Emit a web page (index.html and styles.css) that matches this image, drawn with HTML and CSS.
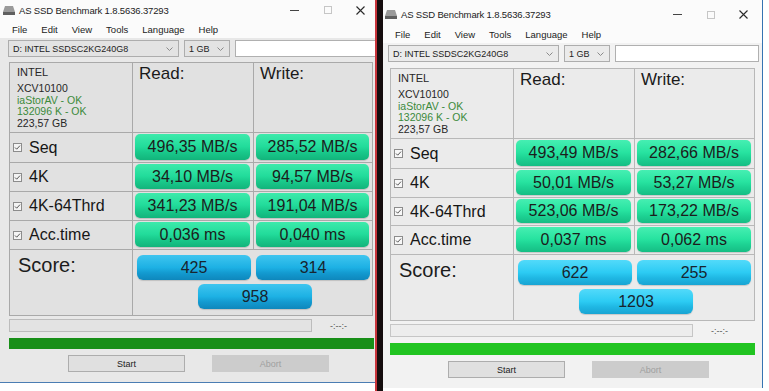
FILE: index.html
```html
<!DOCTYPE html>
<html lang="en">
<head>
  <meta charset="UTF-8">
  <title>AS SSD Benchmark</title>
  <link rel="stylesheet" href="styles.css">
</head>
<body>
  <div class="frame left">
    <div class="win">
      <div class="titlebar">
        <svg class="appicon" width="12" height="9" viewBox="0 0 12 9"><polygon points="2,0 10,0 12,6 0,6" fill="#9a9a9a"/><rect x="0" y="6" width="12" height="3" fill="#5f5f5f"/></svg>
        <span class="title">AS SSD Benchmark 1.8.5636.37293</span>
        <div class="controls">
          <span class="ctl"><i class="min"></i></span>
          <span class="ctl"><i class="max"></i></span>
          <span class="ctl"><svg width="9" height="9" viewBox="0 0 9 9"><path d="M0.5 0.5L8.5 8.5M8.5 0.5L0.5 8.5" stroke="#2a2a2a" stroke-width="1.1"/></svg></span>
        </div>
      </div>
      <div class="menubar">
        <span>File</span><span>Edit</span><span>View</span><span>Tools</span><span>Language</span><span>Help</span>
      </div>
      <div class="toolbar">
        <div class="combo drive">D: INTEL SSDSC2KG240G8 <svg width="7" height="4" viewBox="0 0 7 4"><polyline points="0.5,0.5 3.5,3.5 6.5,0.5" fill="none" stroke="#8a8a8a"/></svg></div>
        <div class="combo size">1 GB <svg width="7" height="4" viewBox="0 0 7 4"><polyline points="0.5,0.5 3.5,3.5 6.5,0.5" fill="none" stroke="#8a8a8a"/></svg></div>
        <div class="field"></div>
      </div>
      <div class="grid">
        <div class="info">
          <div class="brand">INTEL</div>
          <div>XCV10100</div>
          <div class="ok">iaStorAV - OK</div>
          <div class="ok">132096 K - OK</div>
          <div>223,57 GB</div>
        </div>
        <div class="head">Read:</div>
        <div class="head">Write:</div>

        <div class="label"><svg class="chk" width="9" height="9" viewBox="0 0 9 9"><rect x="0.5" y="0.5" width="8" height="8" fill="#f4f4f4" stroke="#8c8c8c"/><polyline points="2,4.5 3.7,6.2 7,2.6" fill="none" stroke="#555" stroke-width="1"/></svg>Seq</div>
        <div class="cell"><div class="res">496,35 MB/s</div></div>
        <div class="cell"><div class="res">285,52 MB/s</div></div>

        <div class="label"><svg class="chk" width="9" height="9" viewBox="0 0 9 9"><rect x="0.5" y="0.5" width="8" height="8" fill="#f4f4f4" stroke="#8c8c8c"/><polyline points="2,4.5 3.7,6.2 7,2.6" fill="none" stroke="#555" stroke-width="1"/></svg>4K</div>
        <div class="cell"><div class="res">34,10 MB/s</div></div>
        <div class="cell"><div class="res">94,57 MB/s</div></div>

        <div class="label"><svg class="chk" width="9" height="9" viewBox="0 0 9 9"><rect x="0.5" y="0.5" width="8" height="8" fill="#f4f4f4" stroke="#8c8c8c"/><polyline points="2,4.5 3.7,6.2 7,2.6" fill="none" stroke="#555" stroke-width="1"/></svg>4K-64Thrd</div>
        <div class="cell"><div class="res">341,23 MB/s</div></div>
        <div class="cell"><div class="res">191,04 MB/s</div></div>

        <div class="label"><svg class="chk" width="9" height="9" viewBox="0 0 9 9"><rect x="0.5" y="0.5" width="8" height="8" fill="#f4f4f4" stroke="#8c8c8c"/><polyline points="2,4.5 3.7,6.2 7,2.6" fill="none" stroke="#555" stroke-width="1"/></svg>Acc.time</div>
        <div class="cell"><div class="res">0,036 ms</div></div>
        <div class="cell"><div class="res">0,040 ms</div></div>

        <div class="score-label">Score:</div>
        <div class="scores">
          <div class="sbox">425</div>
          <div class="sbox">314</div>
          <div class="sbox total">958</div>
        </div>
      </div>
      <div class="status">
        <div class="progress"></div>
        <span class="time">-:--:-</span>
      </div>
      <div class="bar"></div>
      <div class="buttons">
        <button class="btn">Start</button>
        <button class="btn off">Abort</button>
      </div>
    </div>
  </div>

  <div class="divider"></div>

  <div class="frame right">
    <div class="win">
      <div class="titlebar">
        <svg class="appicon" width="12" height="9" viewBox="0 0 12 9"><polygon points="2,0 10,0 12,6 0,6" fill="#9a9a9a"/><rect x="0" y="6" width="12" height="3" fill="#5f5f5f"/></svg>
        <span class="title">AS SSD Benchmark 1.8.5636.37293</span>
        <div class="controls">
          <span class="ctl"><i class="min"></i></span>
          <span class="ctl"><i class="max"></i></span>
          <span class="ctl"><svg width="9" height="9" viewBox="0 0 9 9"><path d="M0.5 0.5L8.5 8.5M8.5 0.5L0.5 8.5" stroke="#2a2a2a" stroke-width="1.1"/></svg></span>
        </div>
      </div>
      <div class="menubar">
        <span>File</span><span>Edit</span><span>View</span><span>Tools</span><span>Language</span><span>Help</span>
      </div>
      <div class="toolbar">
        <div class="combo drive">D: INTEL SSDSC2KG240G8 <svg width="7" height="4" viewBox="0 0 7 4"><polyline points="0.5,0.5 3.5,3.5 6.5,0.5" fill="none" stroke="#8a8a8a"/></svg></div>
        <div class="combo size">1 GB <svg width="7" height="4" viewBox="0 0 7 4"><polyline points="0.5,0.5 3.5,3.5 6.5,0.5" fill="none" stroke="#8a8a8a"/></svg></div>
        <div class="field"></div>
      </div>
      <div class="grid">
        <div class="info">
          <div class="brand">INTEL</div>
          <div>XCV10100</div>
          <div class="ok">iaStorAV - OK</div>
          <div class="ok">132096 K - OK</div>
          <div>223,57 GB</div>
        </div>
        <div class="head">Read:</div>
        <div class="head">Write:</div>

        <div class="label"><svg class="chk" width="9" height="9" viewBox="0 0 9 9"><rect x="0.5" y="0.5" width="8" height="8" fill="#f8f8f8" stroke="#8c8c8c"/><polyline points="2,4.5 3.7,6.2 7,2.6" fill="none" stroke="#555" stroke-width="1"/></svg>Seq</div>
        <div class="cell"><div class="res">493,49 MB/s</div></div>
        <div class="cell"><div class="res">282,66 MB/s</div></div>

        <div class="label"><svg class="chk" width="9" height="9" viewBox="0 0 9 9"><rect x="0.5" y="0.5" width="8" height="8" fill="#f8f8f8" stroke="#8c8c8c"/><polyline points="2,4.5 3.7,6.2 7,2.6" fill="none" stroke="#555" stroke-width="1"/></svg>4K</div>
        <div class="cell"><div class="res">50,01 MB/s</div></div>
        <div class="cell"><div class="res">53,27 MB/s</div></div>

        <div class="label"><svg class="chk" width="9" height="9" viewBox="0 0 9 9"><rect x="0.5" y="0.5" width="8" height="8" fill="#f8f8f8" stroke="#8c8c8c"/><polyline points="2,4.5 3.7,6.2 7,2.6" fill="none" stroke="#555" stroke-width="1"/></svg>4K-64Thrd</div>
        <div class="cell"><div class="res">523,06 MB/s</div></div>
        <div class="cell"><div class="res">173,22 MB/s</div></div>

        <div class="label"><svg class="chk" width="9" height="9" viewBox="0 0 9 9"><rect x="0.5" y="0.5" width="8" height="8" fill="#f8f8f8" stroke="#8c8c8c"/><polyline points="2,4.5 3.7,6.2 7,2.6" fill="none" stroke="#555" stroke-width="1"/></svg>Acc.time</div>
        <div class="cell"><div class="res">0,037 ms</div></div>
        <div class="cell"><div class="res">0,062 ms</div></div>

        <div class="score-label">Score:</div>
        <div class="scores">
          <div class="sbox">622</div>
          <div class="sbox">255</div>
          <div class="sbox total">1203</div>
        </div>
      </div>
      <div class="status">
        <div class="progress"></div>
        <span class="time">-:--:-</span>
      </div>
      <div class="bar"></div>
      <div class="buttons">
        <button class="btn">Start</button>
        <button class="btn off">Abort</button>
      </div>
    </div>
  </div>
</body>
</html>
```

FILE: styles.css
```css
* {
  box-sizing: border-box;
}

body {
  margin: 0;
  width: 769px;
  height: 391px;
  overflow: hidden;
  background: #fff;
  display: flex;
  align-items: flex-start;
  font-family: 'Liberation Sans', Arial, sans-serif;
  color: #1e1e1e;
}

.frame {
  flex: none;
  overflow: hidden;
}

.frame.left {
  width: 375px;
  height: 383px;
  border-bottom: 1px solid #4a7db3;
}

.frame.right {
  width: 380px;
  height: 388px;
  border-right: 1px solid #3574b2;
}

.divider {
  flex: none;
  width: 8px;
  height: 391px;
  background: #150d0e;
  border-left: 2px solid #c8353c;
}

.win {
  width: 380px;
  height: 100%;
  background: #e8e8e8;
}

.right .win {
  background: #f2f2f2;
}

/* title bar */
.titlebar {
  height: 20px;
  display: flex;
  align-items: center;
  padding-left: 3px;
  background: #fbfbfb;
}

.right .titlebar {
  height: 25px;
  padding-top: 4px;
  padding-left: 2px;
}

.appicon {
  margin-right: 4px;
}

.title {
  font-size: 9.5px;
  letter-spacing: -0.15px;
  color: #222;
}

.controls {
  margin-left: auto;
  display: flex;
  height: 100%;
  flex: none;
}

.ctl {
  width: 33px;
  height: 100%;
  display: flex;
  align-items: center;
  justify-content: center;
}

.ctl:last-child {
  margin-right: 3px;
}

.min {
  width: 9px;
  height: 1px;
  background: #444;
}

.max {
  width: 8px;
  height: 8px;
  border: 1px solid #c6c6c6;
}

/* menu */
.menubar {
  height: 18px;
  display: flex;
  align-items: center;
  gap: 14px;
  padding-left: 12px;
  font-size: 9.5px;
  color: #222;
  background: #fbfbfb;
}

/* drive selector row */
.toolbar {
  display: flex;
  gap: 5px;
  padding: 2px 0 0 0;
  margin: 0 0 5px 8px;
}

.right .toolbar {
  margin: 0 0 6px 5px;
}

.combo {
  height: 17px;
  border: 1px solid #adadad;
  background: #e3e3e3;
  font-size: 9px;
  color: #222;
  display: flex;
  align-items: center;
  justify-content: space-between;
  padding: 0 5px 0 4px;
}

.right .combo {
  background: #ebebeb;
}

.drive {
  width: 171px;
}

.size {
  width: 46px;
}

.field {
  flex: 1;
  height: 17px;
  background: #fff;
  border: 1px solid #b0b0b0;
  margin-right: 4px;
}

/* results table */
.grid {
  display: grid;
  grid-template-columns: 122px 120px 118px;
  grid-template-rows: 69px 29px 28px 28px 28px 65px;
  gap: 1px;
  padding: 1px;
  width: 364px;
  margin-left: 9px;
  background: #a9a9a9;
}

.right .grid {
  margin-left: 7px;
  width: 365px;
  grid-template-columns: 122px 120px 119px;
  grid-template-rows: 69px 29px 28px 27px 28px 65px;
  background: #b8b8b8;
}

.grid > div {
  background: #e1e1e1;
}

.right .grid > div {
  background: #ebebeb;
}

.info {
  padding: 3px 0 0 7px;
  font-size: 10.5px;
  line-height: 11.5px;
  color: #262626;
}

.info .brand {
  line-height: 13px;
  margin-bottom: 4px;
  font-size: 11px;
}

.info .ok {
  color: #3b8a3b;
}

.head {
  padding: 1px 0 0 6px;
  font-size: 17px;
  line-height: 20px;
  color: #1a1a1a;
}

.label {
  display: flex;
  align-items: center;
  gap: 7px;
  padding-left: 3px;
  font-size: 16px;
  color: #161616;
}

.cell {
  padding: 1px 3px 2px 2px;
}

.res {
  height: 100%;
  display: flex;
  align-items: center;
  justify-content: center;
  border-radius: 5px;
  font-size: 16px;
  color: #1c1c1c;
  background: linear-gradient(to bottom, #3deaab 0%, #22dc9b 48%, #19c98b 70%, #12b47b 100%);
  box-shadow: 0 1px 1px rgba(0, 0, 0, 0.15);
}

.right .res {
  background: linear-gradient(to bottom, #46efb2 0%, #27e3a0 48%, #1dd293 70%, #16bd84 100%);
}

.score-label {
  padding: 3px 0 0 8px;
  font-size: 20px;
  line-height: 24px;
  color: #1c1c1c;
}

.scores {
  grid-column: 2 / 4;
  display: grid;
  grid-template-columns: 114px 114px;
  grid-template-rows: 25px 25px;
  column-gap: 5px;
  row-gap: 4px;
  padding: 5px 0 0 4px;
}

.sbox {
  display: flex;
  align-items: center;
  justify-content: center;
  border-radius: 6px;
  font-size: 16px;
  color: #18242e;
  background: linear-gradient(to bottom, #3fc5ef 0%, #1db1e4 50%, #139ad0 72%, #0e87bc 100%);
  box-shadow: 0 1px 1px rgba(0, 0, 0, 0.15);
}

.right .sbox {
  background: linear-gradient(to bottom, #52dafa 0%, #2ccbf3 50%, #1fb7e3 72%, #18a4d3 100%);
}

.sbox.total {
  grid-column: 1 / 3;
  justify-self: center;
  width: 114px;
  margin-left: 3px;
}

/* progress */
.status {
  display: flex;
  align-items: center;
  margin: 3px 0 0 9px;
  height: 13px;
}

.right .status {
  margin-left: 7px;
}

.progress {
  width: 303px;
  height: 13px;
  background: #e3e3e3;
  border: 1px solid #bcbcbc;
}

.right .progress {
  background: #ededed;
  border-color: #c6c6c6;
}

.time {
  margin-left: 18px;
  font-size: 9px;
  color: #555;
}

.bar {
  width: 365px;
  height: 11px;
  margin: 6px 0 0 9px;
  background: #188f18;
}

.right .bar {
  height: 12px;
  margin-left: 7px;
  background: #21c421;
}

.buttons {
  display: flex;
  gap: 27px;
  margin-top: 6px;
  padding-left: 68px;
}

.right .buttons {
  padding-left: 65px;
}

.btn {
  width: 117px;
  height: 17px;
  padding: 0;
  font-family: inherit;
  font-size: 9px;
  color: #222;
  background: #e0e0e0;
  border: 1px solid #adadad;
}

.btn.off {
  color: #a0a0a0;
  background: #cccccc;
  border-color: #cccccc;
}
```
